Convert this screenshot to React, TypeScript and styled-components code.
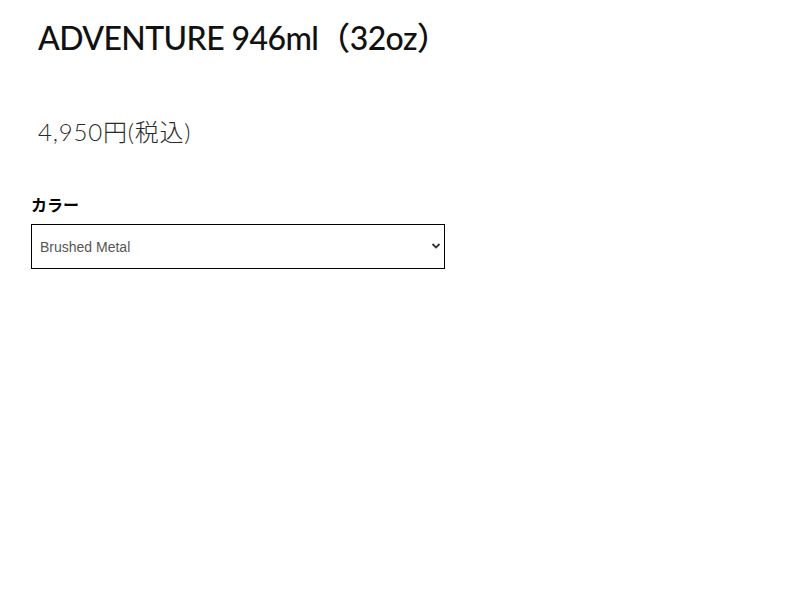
import React from "react";
import styled, { createGlobalStyle } from "styled-components";

const Global = createGlobalStyle`
  html, body { margin: 0; padding: 0; background: #fff; }
  body { font-family: "Lato", "Noto Sans CJK JP", sans-serif; color: #000; }
`;

const Page = styled.div`
  padding: 18px 0 0 31px;
  display: flex;
  flex-direction: column;
`;

const Title = styled.h1`
  margin: 0 0 0 7px;
  font-family: "Lato", "Noto Sans CJK JP", sans-serif;
  font-weight: 500;
  font-size: 32px;
  line-height: 40px;
  letter-spacing: -0.6px;
  color: #111;
`;

const Price = styled.div`
  margin: 59px 0 0 7px;
  font-family: "Lato", "Noto Sans CJK JP", sans-serif;
  font-weight: 300;
  font-size: 24px;
  line-height: 30px;
  letter-spacing: 0.8px;
  color: #2a2a2a;
`;

const Label = styled.label`
  margin-top: 47px;
  font-family: "Noto Sans CJK JP", sans-serif;
  font-weight: 700;
  font-size: 16px;
  line-height: 20px;
  color: #000;
`;

const SelectWrap = styled.div`
  position: relative;
  margin-top: 10px;
  width: 414px;
`;

const Select = styled.select`
  appearance: none;
  width: 414px;
  height: 45px;
  box-sizing: border-box;
  border: 1px solid #000;
  border-radius: 0;
  background: #fff;
  padding: 0 0 0 8px;
  font-family: "Liberation Sans", Arial, sans-serif;
  font-size: 14px;
  color: #555;
  outline: none;
`;

const Chevron = styled.svg`
  position: absolute;
  right: 4px;
  top: 18px;
  pointer-events: none;
`;

export default function App() {
  return (
    <>
      <Global />
      <Page>
        <Title>ADVENTURE 946ml（32oz）</Title>
        <Price>4,950円(税込)</Price>
        <Label htmlFor="color">カラー</Label>
        <SelectWrap>
          <Select id="color" defaultValue="Brushed Metal">
            <option>Brushed Metal</option>
          </Select>
          <Chevron width="10" height="8" viewBox="0 0 10 8">
            <path d="M1.5 2 L5 5.5 L8.5 2" fill="none" stroke="#333" strokeWidth="1.8" />
          </Chevron>
        </SelectWrap>
      </Page>
    </>
  );
}
